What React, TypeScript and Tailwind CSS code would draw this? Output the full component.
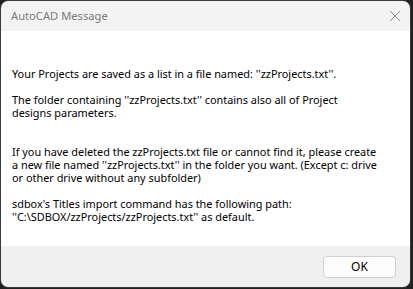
export default function App() {
  const font = { fontFamily: '"Segoe UI", "Noto Sans", "Open Sans", sans-serif' };
  const lines = [
    "Your Projects are saved as a list in a file named: ''zzProjects.txt''.",
    "",
    "The folder containing ''zzProjects.txt'' contains also all of Project",
    "designs parameters.",
    "",
    "",
    "If you have deleted the zzProjects.txt file or cannot find it, please create",
    "a new file named ''zzProjects.txt'' in the folder you want. (Except c: drive",
    "or other drive without any subfolder)",
    "",
    "sdbox's Titles import command has the following path:",
    "''C:\\SDBOX/zzProjects/zzProjects.txt'' as default.",
  ];
  return (
    <div className="w-[413px] h-[289px] bg-[#202020] overflow-hidden" style={font}>
      <div className="w-[411px] h-[288px] flex flex-col rounded-lg overflow-hidden border border-[#3a3a3a]">
        <div className="h-[30px] bg-[#f3f3f3] flex items-center justify-between pl-[10px] pr-[9px] shrink-0">
          <span className="text-[11.2px] text-[#7a7a7a]">AutoCAD Message</span>
          <svg width="12" height="12" viewBox="0 0 12 12">
            <path d="M1 1 L11 11 M11 1 L1 11" stroke="#8a8a8a" strokeWidth="1" fill="none" />
          </svg>
        </div>
        <div className="flex-1 bg-white pl-[11px] pt-[36px] text-[10.9px] leading-[13px] text-black">
          {lines.map((l, i) => (
            <div key={i} className="h-[13px] leading-[13px] whitespace-pre">{l}</div>
          ))}
        </div>
        <div className="h-[41px] bg-[#f0f0f0] flex items-center justify-end pr-[14px] shrink-0">
          <button className="w-[73px] h-[22px] bg-[#fdfdfd] border border-[#d0d0d0] rounded-[4px] text-[12px] text-black">
            OK
          </button>
        </div>
      </div>
    </div>
  );
}
